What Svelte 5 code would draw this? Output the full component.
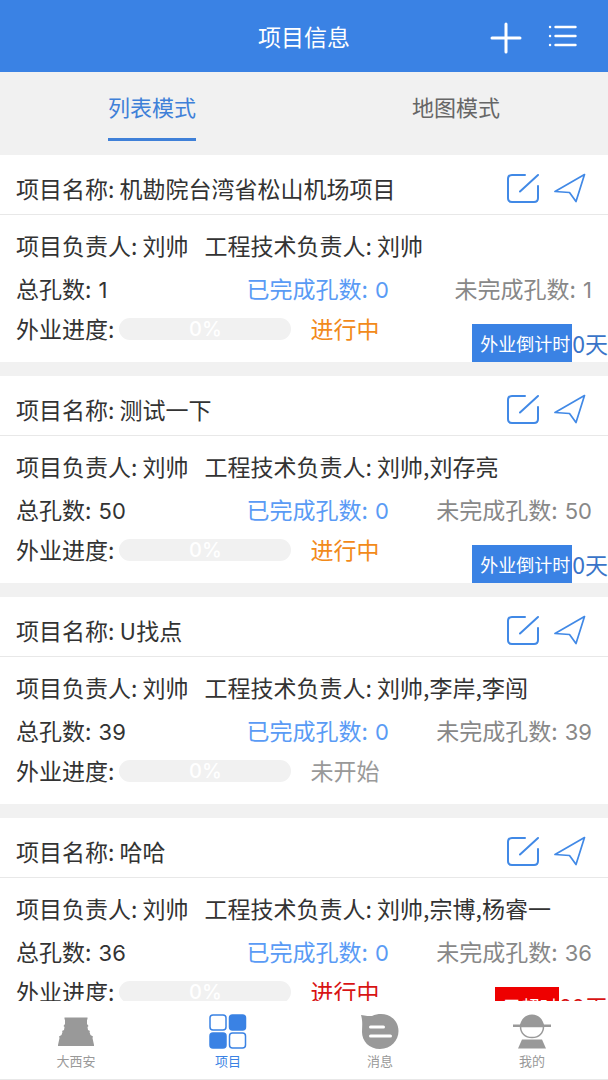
<script>
  const projects = [
    { name: '机勘院台湾省松山机场项目', owner: '刘帅', tech: '刘帅', total: 1, done: 0, left: 1, status: '进行中', tone: 'active', tag: '外业倒计时', days: '0天' },
    { name: '测试一下', owner: '刘帅', tech: '刘帅,刘存亮', total: 50, done: 0, left: 50, status: '进行中', tone: 'active', tag: '外业倒计时', days: '0天' },
    { name: 'U找点', owner: '刘帅', tech: '刘帅,李岸,李闯', total: 39, done: 0, left: 39, status: '未开始', tone: 'idle' },
    { name: '哈哈', owner: '刘帅', tech: '刘帅,宗博,杨睿一', total: 36, done: 0, left: 36, status: '进行中', tone: 'late', tag: '已超时', days: '99天' }
  ];
  let mode = $state('list');
  let page = $state('项目');
</script>

{#snippet navIcon(name)}
  <svg width="38" height="36" viewBox="0 0 38 36" aria-hidden="true">
    {#if name === '大西安'}
      <path fill="currentColor" d="M7.500 3.500h23V5l-.5 1v4l1.500 2-1 1 .5 3 2 1-.5 1 1 3 2.500 1.500-.5 1.500 1.500 7v1H1v-1L2.500 24 2 22.500 4.500 21l1-3-.5-1 2-1 .5-3-1-1L8 10V6l-.5-1z" />
    {:else if name === '项目'}
      <g stroke="currentColor" stroke-width="1.500">
        <rect x="1" y="1" width="16" height="15" rx="3" fill="#fff" />
        <rect x="20.500" y="1" width="16" height="15" rx="3" fill="#3a82e4" />
        <rect x="1" y="19" width="16" height="15" rx="3" fill="#3a82e4" />
        <rect x="20.500" y="19" width="16" height="15" rx="3" fill="#fff" />
      </g>
    {:else if name === '消息'}
      <path fill="currentColor" d="M0 1c5 1 8 1 11 1C14 .5 17 0 20 0c10 0 17.500 7.500 17.500 17S30 35 19 35 1 27 1 18C1 12 2 8 0 1z" />
      <path stroke="#fff" stroke-width="3" stroke-linecap="round" d="M9.500 13h13M9.500 22h20" />
    {:else}
      <path fill="currentColor" d="M7 10.500C9 4 13 .5 19 .5S29 4 31 10.500h7v2.500H0v-2.500z" />
      <path fill="#fff" stroke="currentColor" stroke-width="1.500" d="M7.500 12.500h23C30.500 19 26 23.500 19 23.500S7.500 19 7.500 12.500z" />
      <path fill="currentColor" d="M9 25.500h20l4 9H5z" />
    {/if}
  </svg>
{/snippet}

<div class="app">
  <header>
    <h1>项目信息</h1>
    <div class="actions">
      <button aria-label="新增">
        <svg width="32" height="32" viewBox="0 0 32 32"><path fill="none" stroke="#fff" stroke-width="3" stroke-linecap="round" d="M2 16h28M16 2v28" /></svg>
      </button>
      <button aria-label="菜单">
        <svg width="30" height="32" viewBox="0 0 30 32"><path fill="none" stroke="#fff" stroke-width="2.400" stroke-linecap="round" d="M7.500 5h20M7.500 14h20M7.500 23h20M2 5h.1M2 14h.1M2 23h.1" /></svg>
      </button>
    </div>
  </header>

  <div class="tabs" role="tablist">
    <button role="tab" aria-selected={mode === 'list'} onclick={() => (mode = 'list')}><span>列表模式</span></button>
    <button role="tab" aria-selected={mode === 'map'} onclick={() => (mode = 'map')}><span>地图模式</span></button>
  </div>

  <main>
    {#each projects as p}
      <article>
        <div class="title">
          <h2>项目名称: {p.name}</h2>
          <button aria-label="编辑">
            <svg width="34" height="32" viewBox="0 0 34 32"><path fill="none" stroke="#4189e6" stroke-width="2" stroke-linecap="round" stroke-linejoin="round" d="M19 3H6Q2 3 2 7v19q0 4 4 4h22q4 0 4-4V14M14 19.500L32 3" /></svg>
          </button>
          <button aria-label="导航">
            <svg width="32" height="32" viewBox="0 0 32 32"><path fill="none" stroke="#4189e6" stroke-width="1.700" stroke-linejoin="round" d="M30.500 2.500L1 19.500l14.500 1 6.500 9z" /></svg>
          </button>
        </div>
        <div class="people">
          <span>项目负责人: {p.owner}</span>
          <span>工程技术负责人: {p.tech}</span>
        </div>
        <div class="counts">
          <span class="total">总孔数: <b>{p.total}</b></span>
          <span class="done">已完成孔数: <b>{p.done}</b></span>
          <span class="left">未完成孔数: <b>{p.left}</b></span>
        </div>
        <div class="progress">
          <span>外业进度:</span>
          <div class="bar" role="progressbar" aria-label="外业进度" aria-valuenow="0" aria-valuemin="0" aria-valuemax="100">0%</div>
          <span class={p.tone}>{p.status}</span>
          {#if p.tag}
            <div class="deadline {p.tone}"><span class="tag">{p.tag}</span><span class="days">{p.days}</span></div>
          {/if}
        </div>
      </article>
    {/each}
  </main>

  <nav>
    {#each ['大西安', '项目', '消息', '我的'] as item}
      <button class:current={page === item} onclick={() => (page = item)}>
        {@render navIcon(item)}
        <span>{item}</span>
      </button>
    {/each}
  </nav>
</div>

<style>
  :global(body) {
    margin: 0;
  }
  .app {
    display: flex;
    flex-direction: column;
    height: 100vh;
    overflow: hidden;
    background: #f1f1f1;
    color: #333;
    font-family: "Noto Sans CJK SC", sans-serif;
    font-size: 23px;
    line-height: 40px;
  }
  button {
    display: flex;
    padding: 0;
    border: 0;
    background: none;
    color: inherit;
    font: inherit;
    cursor: pointer;
  }
  svg {
    display: block;
  }
  h1, h2 {
    margin: 0;
    font-size: 23px;
    font-weight: 400;
  }
  b {
    margin-left: 2px;
    font-family: Inter, sans-serif;
    font-size: 22px;
    font-weight: 400;
    line-height: 1;
  }
  header {
    display: grid;
    grid-template-columns: 1fr auto 1fr;
    align-items: center;
    flex: none;
    height: 72px;
    padding: 0 30px;
    background: #3a82e4;
    color: #fff;
  }
  h1 {
    grid-column: 2;
  }
  .actions {
    display: flex;
    justify-content: flex-end;
    gap: 26px;
    padding-top: 4px;
  }
  .tabs {
    display: grid;
    grid-template-columns: 1fr 1fr;
    flex: none;
    height: 83px;
    color: #666;
    font-size: 22px;
  }
  .tabs button {
    justify-content: center;
    align-items: flex-start;
    padding-top: 14px;
  }
  .tabs span {
    padding-bottom: 12px;
    border-bottom: 3px solid transparent;
  }
  .tabs [aria-selected='true'] span {
    border-color: #3f80d8;
    color: #3f80d8;
  }
  main {
    display: flex;
    flex: 1;
    flex-direction: column;
    gap: 14px;
    min-height: 0;
    overflow-y: auto;
    scrollbar-width: none;
  }
  article {
    flex: none;
    background: #fff;
    white-space: nowrap;
  }
  .title {
    display: flex;
    align-items: center;
    gap: 14px;
    height: 60px;
    padding: 6px 22px 0 16px;
    border-bottom: 1px solid #e8e8e8;
    box-sizing: border-box;
  }
  h2 {
    flex: 1;
    overflow: hidden;
    text-overflow: ellipsis;
  }
  .people {
    display: flex;
    gap: 16px;
    padding: 10px 16px 0;
  }
  .counts {
    display: flex;
    padding: 3px 16px 0;
  }
  .total {
    width: 40%;
  }
  .done {
    color: #5a9bf5;
  }
  .left {
    margin-left: auto;
    color: #888;
  }
  .progress {
    display: flex;
    height: 54px;
    padding-left: 16px;
  }
  .bar {
    width: 172px;
    height: 22px;
    margin: 10px 19px 0 5px;
    border-radius: 11px;
    background: #f1f1f1;
    color: #fff;
    font-family: Inter, sans-serif;
    font-size: 20px;
    font-weight: 500;
    line-height: 22px;
    text-align: center;
  }
  .active {
    color: #f28a1a;
  }
  .idle {
    color: #999;
  }
  .late {
    color: #d81414;
  }
  .deadline {
    display: flex;
    align-self: flex-end;
    margin-left: auto;
    line-height: 38px;
  }
  .deadline.active {
    color: #3a74c8;
  }
  .tag {
    padding: 0 2px 0 8px;
    background: #3a82e4;
    color: #fff;
    font-size: 18px;
  }
  .late .tag {
    background: #ee0000;
  }
  nav {
    display: grid;
    grid-template-columns: repeat(4, 1fr);
    flex: none;
    height: 78px;
    border-bottom: 1px solid #e8e8e8;
    background: #fff;
    color: #999;
    font-size: 13px;
    line-height: 20px;
  }
  nav button {
    flex-direction: column;
    align-items: center;
    gap: 1px;
    padding-top: 13px;
  }
  .current {
    color: #3a82e4;
  }
</style>
